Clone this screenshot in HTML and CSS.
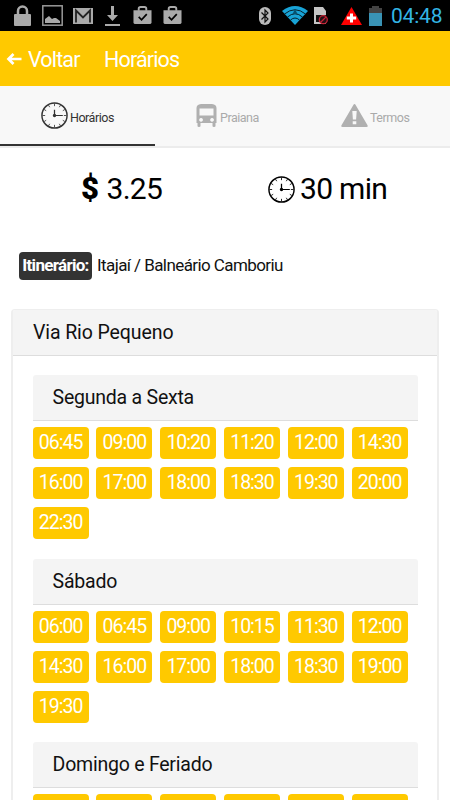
FILE: index.html
```html
<!DOCTYPE html>
<html lang="pt-BR">
<head>
<meta charset="utf-8">
<title>Horários</title>
<link rel="stylesheet" href="styles.css">
</head>
<body>
<svg width="0" height="0" class="defs">
  <defs>
    <symbol id="clock" viewBox="0 0 26 26">
      <circle cx="13" cy="13" r="12.1" fill="none" stroke="currentColor" stroke-width="1.4"/>
      <path d="M13 1.500v2.500M13 22v2.500M1.500 13H4M22 13h2.500M7.200 3l1.200 2M18.800 3l-1.200 2M23 7.200l-2 1.200M23 18.800l-2-1.200M18.800 23l-1.200-2M7.200 23l1.200-2M3 18.800l2-1.200M3 7.200l2 1.200" fill="none" stroke="currentColor" stroke-width=".8"/>
      <path d="M13 7.500V13h8" fill="none" stroke="currentColor" stroke-width="1.2"/>
      <circle cx="13" cy="13" r="1.6" fill="currentColor"/>
    </symbol>
    <symbol id="bag" viewBox="0 0 20 20">
      <path d="M6 5V3a2 2 0 0 1 2-2h4a2 2 0 0 1 2 2v2" fill="none" stroke="#aaa" stroke-width="2"/>
      <path d="M.5 4.500h19V17a2 2 0 0 1-2 2h-15a2 2 0 0 1-2-2z" fill="#aaa"/>
      <path d="M6 11.500l3 3 5.500-6" fill="none" stroke="#000" stroke-width="1.800"/>
    </symbol>
  </defs>
</svg>
<div class="status">
  <div class="notices">
    <svg width="17" height="21" viewBox="0 0 17 21"><path d="M4 10V6a4.500 4.500 0 0 1 9 0v4" fill="none" stroke="#aaa" stroke-width="2.500"/><rect y="9" width="17" height="12" rx="1" fill="#aaa"/></svg>
    <svg class="picture" width="21" height="21" viewBox="0 0 21 21"><rect x=".8" y=".8" width="19.400" height="19.400" fill="none" stroke="#999" stroke-width="1.500"/><path d="M3 18v-4l4-3 3 3 2-1 2 0 4 3v2z" fill="#aaa"/></svg>
    <svg class="mail" width="20" height="16" viewBox="0 0 20 16"><rect width="20" height="16" fill="#aaa"/><path d="M3 14.500V2.500l7 7 7-7v12" fill="none" stroke="#222" stroke-width="1.800"/></svg>
    <svg class="download" width="15" height="20" viewBox="0 0 15 20"><path d="M6 0h3v9h4l-5.500 6L2 9h4zM0 18h15v2H0z" fill="#aaa"/></svg>
    <svg class="store" width="19" height="19"><use href="#bag"/></svg>
    <svg class="store-2" width="19" height="19"><use href="#bag"/></svg>
  </div>
  <div class="system">
    <svg width="12" height="18" viewBox="0 0 12 18"><rect width="12" height="18" rx="6" fill="#bbb"/><path d="M2.500 5.500l6.500 6.500-3 3V3l3 3-6.500 6.500" fill="none" stroke="#111" stroke-width="1.200"/></svg>
    <svg class="wifi" width="26" height="19" viewBox="0 0 26 19"><path d="M0 5Q13-5 26 5L13 19z" fill="#18a3d6"/><path d="M2.500 8Q13-.5 23.500 8M5.500 11Q13 4.500 20.500 11M8.500 14Q13 10 17.500 14" fill="none" stroke="#06202b" stroke-width="1"/><path d="M13 3l2.500 5h-5z" fill="#07516f"/></svg>
    <svg class="sim" width="14" height="18" viewBox="0 0 14 18"><path d="M0 0h9l3 4v13H0z" fill="#c4c4c4"/><path d="M2 8h10v7H2z" fill="#111"/><circle cx="9.300" cy="12.700" r="4" fill="#251014" stroke="#c42235" stroke-width="1.300"/><path d="M6.500 15.500l5.600-5.600" stroke="#c42235" stroke-width="1.300"/></svg>
    <svg class="alert" width="21" height="18" viewBox="0 0 21 18"><path d="M10.500 0L21 18H0z" fill="#f00"/><path d="M10.500 6.500v9M5.800 11h9.400" stroke="#fff" stroke-width="3"/></svg>
    <svg class="battery" width="13" height="20" viewBox="0 0 13 20"><path d="M3 0h7v2h3v5H0V2h3z" fill="#444"/><path d="M0 7h13v13H0z" fill="#3993b5"/></svg>
    <span class="time">04:48</span>
  </div>
</div>
<header class="bar">
  <svg width="17" height="14" viewBox="0 0 17 14"><path d="M15.500 7H2.500M7.500 2L2.500 7l5 5" fill="none" stroke="#fff" stroke-width="2.700"/></svg>
  <span class="back">Voltar</span>
  <span class="title">Horários</span>
</header>
<nav class="tabs">
  <div class="tab active"><svg width="27" height="27"><use href="#clock"/></svg><span>Horários</span></div>
  <div class="tab bus"><svg width="22" height="23" viewBox="0 0 22 23"><path fill-rule="evenodd" d="M5 0h11q4.500.5 4.500 4v15h-1v3q0 1-1.500 1t-1.500-1v-3h-12v3q0 1-1.500 1T1.500 22v-3h-1V4Q.5.500 5 0zM3.500 4.500v7h14v-7zM5 14a1.900 1.900 0 1 0 .1 0zM16 14a1.900 1.900 0 1 0 .1 0z" fill="#b0b0b0"/></svg><span>Praiana</span></div>
  <div class="tab terms"><svg width="27" height="23" viewBox="0 0 27 23"><path fill-rule="evenodd" d="M13.500 0q.7 0 1 .8l12 20.500q.8 1.700-1 1.700h-24q-1.800 0-1-1.700L12.500.8q.3-.8 1-.8zM11.300 7l.6 8.500h3.200l.6-8.500zM11.700 17.200v3h3.600v-3z" fill="#b0b0b0"/></svg><span>Termos</span></div>
</nav>
<section class="facts">
  <div class="price"><b>$</b><span>3.25</span></div>
  <div class="length"><svg width="27" height="27"><use href="#clock"/></svg><span>30 min</span></div>
</section>
<div class="route"><b>Itinerário:</b><span>Itajaí / Balneário Camboriu</span></div>
<main class="card">
  <h1>Via Rio Pequeno</h1>
  <section class="group">
    <h2>Segunda a Sexta</h2>
    <div class="times"><i>06:45</i><i>09:00</i><i>10:20</i><i>11:20</i><i>12:00</i><i>14:30</i><i>16:00</i><i>17:00</i><i>18:00</i><i>18:30</i><i>19:30</i><i>20:00</i><i>22:30</i></div>
  </section>
  <section class="group">
    <h2>Sábado</h2>
    <div class="times"><i>06:00</i><i>06:45</i><i>09:00</i><i>10:15</i><i>11:30</i><i>12:00</i><i>14:30</i><i>16:00</i><i>17:00</i><i>18:00</i><i>18:30</i><i>19:00</i><i>19:30</i></div>
  </section>
  <section class="group last">
    <h2>Domingo e Feriado</h2>
    <div class="times"><i></i><i></i><i></i><i></i><i></i><i></i></div>
  </section>
</main>
</body>
</html>
```
FILE: styles.css
```css
* { box-sizing: border-box; }
body { margin: 0; height: 800px; overflow: hidden; display: flex; flex-direction: column; background: #fff; color: #111; font-family: Roboto, sans-serif; white-space: nowrap; }
body > * { flex: none; }
svg { display: block; flex: none; }
.defs { position: absolute; }
.status { height: 31px; background: #000; display: flex; justify-content: space-between; padding: 0 8px 0 14px; }
.notices { display: flex; align-items: center; }
.picture { margin-left: 11px; }
.mail { margin-left: 10px; }
.download { margin-left: 12px; }
.store { margin-left: 13px; }
.store-2 { margin-left: 11px; }
.system { display: flex; align-items: center; }
.wifi { margin-left: 11px; }
.sim { margin-left: 6px; }
.alert { margin-left: 13px; }
.battery { margin-left: 7px; }
.time { margin-left: 9px; width: 51px; color: #33b5e5; font-size: 21px; letter-spacing: -0.2px; line-height: 32px; }
.bar { height: 55px; background: #ffc900; color: #fff; display: flex; align-items: center; padding-left: 6px; font-size: 21.500px; letter-spacing: -0.850px; }
.back { margin-left: 5px; width: 76px; }
.bar span { padding-top: 2px; }
.tabs { height: 62px; background: #f8f8f8; border-bottom: 2px solid #ececec; display: grid; grid-template-columns: 155px 146px 149px; font-size: 12.500px; letter-spacing: -0.480px; color: #aaa; }
.tab { display: flex; align-items: center; padding: 0 0 1px 41px; gap: 2px; }
.tab span { padding-top: 4px; }
.terms { padding-left: 40px; }
.active { color: #333; border-bottom: 2.500px solid #333; padding-bottom: 0; }
.facts { height: 104px; display: grid; grid-template-columns: 268px 1fr; align-items: start; padding-top: 21px; font-size: 30px; line-height: 40px; color: #000; letter-spacing: -0.700px; }
.price { padding-left: 81px; display: flex; }
.price b { width: 25.500px; font-size: 31px; font-weight: 900; }
.length { display: flex; align-items: center; gap: 5px; }
.route { display: flex; align-items: center; height: 28px; padding-left: 19px; font-size: 17px; letter-spacing: -0.580px; line-height: 28px; }
.route b { width: 73px; height: 28px; line-height: 27px; background: #333; color: #fff; border-radius: 4px; text-align: center; margin-right: 5px; letter-spacing: -0.700px; }
.route span { line-height: 27px; padding-bottom: 1px; }
.card { flex: 1; min-height: 0; overflow: hidden; margin: 29px 11px 0; border: 1px solid #eee; border-width: 1px 2px 0; border-radius: 4px 4px 0 0; }
h1, h2 { margin: 0; font-weight: 400; font-size: 19.500px; letter-spacing: -0.100px; height: 46px; line-height: 45px; background: #f4f4f4; border-bottom: 1px solid #ddd; padding-left: 20px; }
.group { margin: 18.700px 19.300px 0 19.600px; height: 165.200px; }
.last { height: auto; }
h2 { border-radius: 3px 3px 0 0; letter-spacing: -0.230px; }
.times { display: grid; grid-template-columns: repeat(6, 56px); grid-auto-rows: 32.800px; gap: 7.200px 7.800px; padding-top: 6px; }
.times i { background: #ffc900; border-radius: 4px; color: #fff; font-style: normal; font-size: 19.500px; line-height: 31px; text-align: center; letter-spacing: -1px; }
```
